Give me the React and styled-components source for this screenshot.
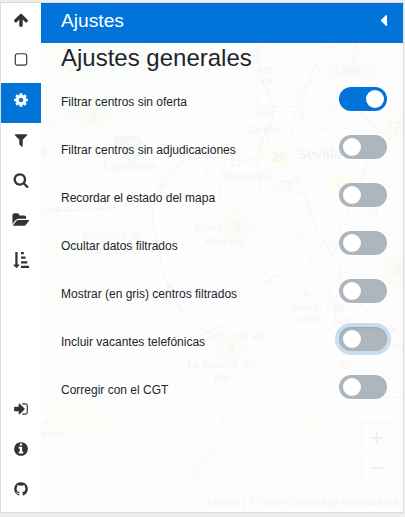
import React, { useState } from "react";
import styled, { createGlobalStyle, css } from "styled-components";

const GlobalStyle = createGlobalStyle`
  *, *::before, *::after { box-sizing: border-box; }
  html, body { margin: 0; padding: 0; }
  body {
    background: #efefef;
    color: #212529;
    font-family: "Liberation Sans", Arial, sans-serif;
    overflow: hidden;
  }
`;

const Page = styled.div`
  height: 517px;
  padding: 2px 1px 4px 0;
  background: #efefef;
`;

const Sidebar = styled.div`
  display: flex;
  height: 511px;
  border: 1px solid #dcdcdc;
  background: #fff;
  overflow: hidden;
`;

const TabStrip = styled.nav`
  display: flex;
  flex-direction: column;
  justify-content: space-between;
  flex: 0 0 40px;
  background: #fff;
`;

const TabGroup = styled.div`
  display: flex;
  flex-direction: column;
`;

const Tab = styled.button`
  display: flex;
  align-items: center;
  justify-content: center;
  width: 40px;
  height: 40px;
  margin: 0;
  padding: 0 0 6px;
  border: 0;
  cursor: pointer;
  color: ${(p) => (p.$active ? "#fff" : "#333")};
  background: ${(p) => (p.$active ? "#0074d9" : "#fff")};
`;

const Glyph = styled.svg`
  display: block;
  width: ${(p) => p.$size}px;
  height: ${(p) => p.$size}px;
  fill: currentColor;
  overflow: visible;
`;

const Pane = styled.section`
  display: flex;
  flex-direction: column;
  flex: 1;
  min-width: 0;
  position: relative;
  background: #fdfdfd;
`;

const MapBackdrop = styled.svg`
  position: absolute;
  left: 0;
  top: 40px;
  width: 362px;
  height: 469px;
  opacity: 0.75;
  font-family: "Noto Sans", sans-serif;
`;

const Header = styled.header`
  display: flex;
  justify-content: space-between;
  align-items: center;
  height: 40px;
  padding: 0 10px 5px 20px;
  color: #fff;
  background: #0074d9;
`;

const HeaderTitle = styled.h1`
  margin: 0;
  font-size: 19.2px;
  font-weight: 400;
  line-height: 24px;
`;

const Content = styled.div`
  position: relative;
  padding: 0 16px 0 20px;
`;

const SectionTitle = styled.h2`
  margin: 0 0 6px;
  font-size: 24px;
  font-weight: 400;
  line-height: 29px;
`;

const SettingRow = styled.label`
  display: flex;
  justify-content: space-between;
  align-items: flex-start;
  height: 48px;
  padding-top: 9px;
  font-size: 12px;
  line-height: 18px;
  cursor: pointer;
`;

const SettingText = styled.span`
  padding-top: 6px;
`;

const Switch = styled.button`
  display: flex;
  align-items: center;
  justify-content: ${(p) => (p.$on ? "flex-end" : "flex-start")};
  width: 48px;
  height: 24px;
  margin: 0;
  padding: 0 3px 0 4px;
  border: 0;
  border-radius: 12px;
  cursor: pointer;
  background: ${(p) => (p.$on ? "#0074d9" : "#adb5bd")};
  ${(p) =>
    p.$focused &&
    css`
      box-shadow: 0 0 0 4px #c9dded, inset 0 1px 2px rgba(0, 0, 0, 0.1);
    `}
  outline: none;
`;

const Knob = styled.span`
  width: 18px;
  height: 18px;
  border-radius: 50%;
  background: #fff;
`;

const icons = {
  up: "M1675 971q0 51-37 90l-75 75q-38 38-91 38-54 0-90-38l-294-293v704q0 52-37.5 84.5t-90.5 32.5h-128q-53 0-90.5-32.5t-37.5-84.5v-704l-294 293q-36 38-90 38t-90-38l-75-75q-38-38-38-90 0-53 38-91l651-651q35-37 90-37 54 0 91 37l651 651q37 39 37 91z",
  square:
    "M1312 256h-832q-66 0-113 47t-47 113v832q0 66 47 113t113 47h832q66 0 113-47t47-113v-832q0-66-47-113t-113-47zm288 160v832q0 119-84.5 203.5t-203.5 84.5h-832q-119 0-203.5-84.5t-84.5-203.5v-832q0-119 84.5-203.5t203.5-84.5h832q119 0 203.5 84.5t84.5 203.5z",
  gear: "M1152 896q0-106-75-181t-181-75-181 75-75 181 75 181 181 75 181-75 75-181zm512-109v222q0 12-8 23t-20 13l-185 28q-19 54-39 91 35 50 107 138 10 12 10 25t-9 23q-27 37-99 108t-94 71q-12 0-26-9l-138-108q-44 23-91 38-16 136-29 186-7 28-36 28h-222q-14 0-24.5-8.5t-11.5-21.5l-28-184q-49-16-90-37l-141 107q-10 9-25 9-14 0-25-11-126-114-165-168-7-10-7-23 0-12 8-23 15-21 51-66.5t54-70.5q-27-50-41-99l-183-27q-13-2-21-12.5t-8-23.5v-222q0-12 8-23t19-13l186-28q14-46 39-92-40-57-107-138-10-12-10-24 0-10 9-23 26-36 98.5-107.5t94.5-71.5q13 0 26 10l138 107q44-23 91-38 16-136 29-186 7-28 36-28h222q14 0 24.5 8.5t11.5 21.5l28 184q49 16 90 37l142-107q9-9 24-9 13 0 25 10 129 119 165 170 7 8 7 22 0 12-8 23-15 21-51 66.5t-54 70.5q26 50 41 98l183 28q13 2 21 12.5t8 23.5z",
  filter:
    "M1595 295q17 41-14 70l-493 493v742q0 42-39 59-13 5-25 5-27 0-45-19l-256-256q-19-19-19-45v-486l-493-493q-31-29-14-70 17-39 59-39h1280q42 0 59 39z",
  search:
    "M1216 832q0-185-131.5-316.5t-316.5-131.5-316.5 131.5-131.5 316.5 131.5 316.5 316.5 131.5 316.5-131.5 131.5-316.5zm512 832q0 52-38 90t-90 38q-54 0-90-38l-343-342q-179 124-399 124-143 0-273.5-55.5t-225-150-150-225-55.5-273.5 55.5-273.5 150-225 225-150 273.5-55.5 273.5 55.5 225 150 150 225 55.5 273.5q0 220-124 399l343 343q37 37 37 90z",
  folder:
    "M1815 952q0 31-31 66l-336 396q-43 51-120.5 86.5t-143.5 35.5h-1088q-34 0-60.5-13t-26.5-43q0-31 31-66l336-396q43-51 120.5-86.5t143.5-35.5h1088q34 0 60.5 13t26.5 43zm-343-344v160h-832q-94 0-197 47.5t-164 119.5l-337 396-5 6q0-4-.5-12.5t-.5-12.5v-960q0-92 66-158t158-66h320q92 0 158 66t66 158v32h544q92 0 158 66t66 158z",
  sort: "M736 1440q0 12-10 24l-319 319q-10 9-23 9-12 0-23-9l-320-320q-15-16-7-35 8-20 30-20h192v-1376q0-14 9-23t23-9h192q14 0 23 9t9 23v1376h192q14 0 23 9t9 23zm1056 128v192q0 14-9 23t-23 9h-832q-14 0-23-9t-9-23v-192q0-14 9-23t23-9h832q14 0 23 9t9 23zm-192-512v192q0 14-9 23t-23 9h-640q-14 0-23-9t-9-23v-192q0-14 9-23t23-9h640q14 0 23 9t9 23zm-192-512v192q0 14-9 23t-23 9h-448q-14 0-23-9t-9-23v-192q0-14 9-23t23-9h448q14 0 23 9t9 23zm-192-512v192q0 14-9 23t-23 9h-256q-14 0-23-9t-9-23v-192q0-14 9-23t23-9h256q14 0 23 9t9 23z",
  signIn:
    "M1312 896q0 26-19 45l-544 544q-19 19-45 19t-45-19-19-45v-288h-448q-26 0-45-19t-19-45v-384q0-26 19-45t45-19h448v-288q0-26 19-45t45-19 45 19l544 544q19 19 19 45zm352-352v704q0 119-84.5 203.5t-203.5 84.5h-320q-13 0-22.5-9.5t-9.5-22.5q0-4-1-20t-.5-26.5 3-23.5 10-19.5 20.5-6.5h320q66 0 113-47t47-113v-704q0-66-47-113t-113-47h-312l-11.5-1-11.5-3-8-5.5-7-9-2-13.5q0-4-1-20t-.5-26.5 3-23.5 10-19.5 20.5-6.5h320q119 0 203.5 84.5t84.5 203.5z",
  info: "M1152 1376v-160q0-14-9-23t-23-9h-96v-512q0-14-9-23t-23-9h-320q-14 0-23 9t-9 23v160q0 14 9 23t23 9h96v320h-96q-14 0-23 9t-9 23v160q0 14 9 23t23 9h448q14 0 23-9t9-23zm-128-896v-160q0-14-9-23t-23-9h-192q-14 0-23 9t-9 23v160q0 14 9 23t23 9h192q14 0 23-9t9-23zm640 416q0 209-103 385.5t-279.5 279.5-385.5 103-385.5-103-279.5-279.5-103-385.5 103-385.5 279.5-279.5 385.5-103 385.5 103 279.5 279.5 103 385.5z",
  github:
    "M896 128q209 0 385.5 103t279.5 279.5 103 385.5q0 251-146.5 451.5t-378.5 277.5q-27 5-40-7t-13-30q0-3 .5-76.5t.5-134.5q0-97-52-142 57-6 102.5-18t94-39 81-66.5 53-105 20.5-150.5q0-119-79-206 37-91-8-204-28-9-81 11t-92 44l-38 24q-93-26-192-26t-192 26q-16-11-42.5-27t-83.5-38.5-85-13.5q-45 113-8 204-79 87-79 206 0 85 20.5 150t52.5 105 80.5 67 94 39 102.5 18q-39 36-49 103-21 10-45 15t-57 5-65.5-21.5-55.5-62.5q-19-32-48.5-52t-49.5-24l-20-3q-21 0-29 4.5t-5 11.5 9 14 13 12l7 5q22 10 43.5 38t31.5 51l10 23q13 38 44 61.5t67 30 69.5 7 55.5-3.5l23-4q0 38 .5 88.5t.5 54.5q0 18-13 30t-40 7q-232-77-378.5-277.5t-146.5-451.5q0-209 103-385.5t279.5-279.5 385.5-103z",
  caretLeft:
    "M1216 448v896q0 26-19 45t-45 19-45-19l-448-448q-19-19-19-45t19-45l448-448q19-19 45-19t45 19 19 45z",
};

const Icon = ({ name, size = 16 }) => (
  <Glyph $size={size} viewBox="0 0 1792 1792" aria-hidden="true">
    <path d={icons[name]} />
  </Glyph>
);

const topTabs = ["up", "square", "gear", "filter", "search", "folder", "sort"];
const bottomTabs = ["signIn", "info", "github"];

const initialSettings = [
  { text: "Filtrar centros sin oferta", on: true },
  { text: "Filtrar centros sin adjudicaciones", on: false },
  { text: "Recordar el estado del mapa", on: false },
  { text: "Ocultar datos filtrados", on: false },
  { text: "Mostrar (en gris) centros filtrados", on: false },
  { text: "Incluir vacantes telefónicas", on: false },
  { text: "Corregir con el CGT", on: false },
];

// Short water dashes of the marshland, as [x, y] starts.
const marsh = [];
for (let r = 0; r < 17; r++) {
  for (let c = 0; c < 13; c++) {
    const x = 4 + c * 15 + ((r * 7) % 13);
    const y = 340 + r * 7.5 + (c % 3) * 2;
    if (x > 70 - r * 4 && x < 178 - Math.max(0, r - 8) * 9) marsh.push([x, y]);
  }
}

// Map seen through the nearly opaque pane; all coordinates are page pixels.
const MapView = () => (
  <MapBackdrop viewBox="41 43 362 469" aria-hidden="true">
    <g fill="#fbfdf9">
      <path d="M41 43h110l-20 60-60 30-30 60z" />
      <path d="M290 440l25 8-6 16-28-4-4 36-10-14z" />
      <path d="M41 200l40 30 20 40-30 60-30-20z" />
      <path d="M385 262h18v30l-20-10z" />
    </g>
    <path fill="#fefdf8" d="M312 402l16 4 2 22-16 10-6-18zM41 405l100 0-30 28-70 6z" />
    <g fill="none" stroke="#f8fcfb" strokeWidth="5">
      <path d="M262 43q-15 80 10 140t50 90-30 100l-12 37" strokeWidth="3" />
      <path d="M224 410q-2 22-14 44t-34 34-12 24" />
      <path d="M228 432q8 12 3 18t-20 8" strokeWidth="3" />
    </g>
    <g fill="none" stroke="#f7f7f7" strokeWidth="1">
      <path d="M41 136q20-22 40-24t40 10 35-10 50-35 50 20 70-33" />
      <path d="M327 115l28-68 48 82M403 190l-80 110M280 43l20 50-12 60 16 40M265 450l20-50" />
      <path d="M220 496l32-34 18-38M327 401l26 58 15 25" />
      <path d="M105 439q10-15 60 5t20 45" strokeDasharray="3 2" />
      <path d="M228 150q-20 60 10 90t40 60M300 230l20 60 20 15" />
    </g>
    <g fill="none" stroke="#fdf2f2" strokeWidth="1.5">
      <path d="M41 210q60 2 90-6t40-30 60-15 34-28" />
      <path d="M170 170q-22 30-16 60t12 50 25 43 55-20 40-20" />
      <path d="M258 43q-2 30 10 50t-2 40-4 60M265 107h70M356 43l-6 60 30 30-25 60-20 50M275 184l30 12 15 40 20 30-6 60" />
      <path d="M342 379q20 20 61 18M357 302l40 30" />
      <path d="M335 43q-40 40-32 80M280 180q12 5 20-3" />
    </g>
    <g fill="none" stroke="#fdf8ee" strokeWidth="1">
      <path d="M290 110l70 40 20-20M320 160l50 10-30 40M280 160l60 20M310 130l50-5M360 60l43 30" />
    </g>
    <g fill="#f2f2f2" fontSize="11" textAnchor="middle">
      <text x="130" y="170">Espartinas</text>
      <text x="264" y="133">Camas</text>
      <text x="198" y="158">Gines</text>
      <text x="246" y="180">Tomares</text>
      <text x="112" y="239">Bollullos de</text>
      <text x="112" y="254">la Mitación</text>
      <text x="225" y="231">Mairena del</text>
      <text x="224" y="245">Aljarafe</text>
      <text x="235" y="340">Coria del Río</text>
      <text x="222" y="368">La Puebla del</text>
      <text x="222" y="382">Río</text>
      <text x="320" y="159" fontSize="15" fill="#ededed">Sevilla</text>
      <text x="44" y="155">a</text>
      <text x="398" y="350">os</text>
    </g>
    <g fill="#f8fcf5">
      <circle cx="93" cy="117" r="15" />
      <circle cx="237" cy="225" r="15" />
      <circle cx="231" cy="348" r="15" />
      <circle cx="397" cy="269" r="15" />
    </g>
    <g fill="#fefcf3">
      <circle cx="279" cy="156" r="15" />
      <circle cx="393" cy="126" r="15" />
      <circle cx="342" cy="187" r="15" />
    </g>
    <g fill="#efefef" fontSize="12" textAnchor="middle">
      <text x="93" y="121">2</text>
      <text x="237" y="230">3</text>
      <text x="231" y="353">3</text>
      <text x="279" y="161">26</text>
      <text x="393" y="131">17</text>
      <text x="342" y="192">13</text>
      <text x="398" y="274">8</text>
    </g>
    <path
      d="M132 166l-8-12q-7-16 8-17 15 1 8 17z"
      fill="#f6fbf6"
      stroke="#eef4ee"
      strokeWidth="2"
    />
    <rect x="114" y="136" width="16" height="10" fill="#f3f4fc" />
    <path d="M114 141h16M122 136v10" stroke="#fcebed" strokeWidth="2" />
    <g stroke="#f4f6fb" strokeWidth="1">
      {marsh.map(([x, y]) => (
        <path key={`${x}-${y}`} d={`M${x + 35} ${y + 47}h6`} />
      ))}
    </g>
    <g fill="#f5f1f6" fontSize="9.5" fontStyle="italic">
      <text x="292" y="310">Base El</text>
      <text x="292" y="322">Copero</text>
      <text x="42" y="425" fill="#f5f5f5">res</text>
      <text x="41" y="437" fill="#f5f5f5">lcázar</text>
    </g>
    <path fill="#f1f1f9" d="M306 287l1 5 5 4-5-1v3l2 2h-5l2-2v-3l-5 1 4-4z" />
    <g fill="#f8efef" fontSize="8" fontStyle="italic">
      <text x="51" y="213">14-14</text>
      <text x="97" y="210">17</text>
      <text x="258" y="73">808</text>
      <text x="260" y="85">808</text>
      <text x="258" y="116">20A</text>
      <text x="283" y="187">14</text>
      <text x="304" y="214">12</text>
      <text x="369" y="215">6B</text>
      <text x="329" y="248">54</text>
      <text x="332" y="312">549</text>
      <text x="336" y="325">549</text>
      <text x="339" y="368">553</text>
      <text x="382" y="332">553</text>
      <text x="204" y="172">5</text>
      <text x="230" y="167">3-2</text>
      <text x="165" y="291">35</text>
    </g>
    <rect x="328" y="64" width="44" height="14" rx="2" fill="#fdfafa" stroke="#f9f6f6" />
    <text x="333" y="75" fontSize="9" fill="#f2eded">A-8009</text>
    <rect x="361" y="423" width="31" height="61" rx="2" fill="#fefefe" stroke="#f7f7f7" strokeWidth="1.5" />
    <path d="M361 453.500h31" stroke="#f7f7f7" />
    <path d="M371 438h12M377 432v12M371 468h12" stroke="#e9e9e9" strokeWidth="2.200" />
    <rect x="201" y="496" width="202" height="16" fill="#fefefe" />
    <text x="207" y="506" fontSize="11" fill="#f0f0f0" fontFamily="Liberation Sans, Arial, sans-serif">
      <tspan fill="#ecf4f8">Leaflet</tspan> | © <tspan fill="#ecf4f8">OpenStreetMap</tspan> contributors
    </text>
  </MapBackdrop>
);

export default function App() {
  const [active, setActive] = useState("gear");
  const [settings, setSettings] = useState(initialSettings);
  const [focused, setFocused] = useState(5);

  const toggle = (index) => {
    setFocused(index);
    setSettings((all) => all.map((s, i) => (i === index ? { ...s, on: !s.on } : s)));
  };

  const renderTab = (name) => (
    <Tab key={name} $active={name === active} onClick={() => setActive(name)} aria-label={name}>
      <Icon name={name} />
    </Tab>
  );

  return (
    <>
      <GlobalStyle />
      <Page>
        <Sidebar>
          <TabStrip>
            <TabGroup>{topTabs.map(renderTab)}</TabGroup>
            <TabGroup>{bottomTabs.map(renderTab)}</TabGroup>
          </TabStrip>
          <Pane>
            <MapView />
            <Header>
              <HeaderTitle>Ajustes</HeaderTitle>
              <Icon name="caretLeft" size={19.2} />
            </Header>
            <Content>
              <SectionTitle>Ajustes generales</SectionTitle>
              {settings.map(({ text, on }, i) => (
                <SettingRow key={text}>
                  <SettingText>{text}</SettingText>
                  <Switch
                    role="switch"
                    aria-checked={on}
                    $on={on}
                    $focused={i === focused}
                    onClick={() => toggle(i)}
                  >
                    <Knob />
                  </Switch>
                </SettingRow>
              ))}
            </Content>
          </Pane>
        </Sidebar>
      </Page>
    </>
  );
}
